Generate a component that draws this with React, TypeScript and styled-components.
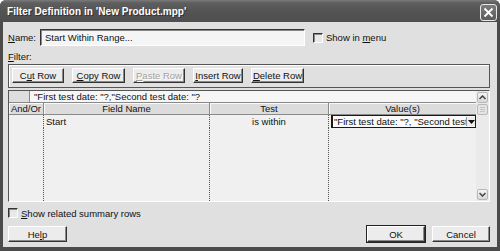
import React from "react";
import styled, { createGlobalStyle } from "styled-components";

const Global = createGlobalStyle`
  html, body { margin: 0; padding: 0; background: #ffffff; }
  body { font-family: "Liberation Sans", Arial, sans-serif; }
  * { box-sizing: border-box; }
`;

const Window = styled.div`
  width: 500px;
  height: 251px;
  background: #4b4b4b;
  border-radius: 6px 6px 0 0;
  display: flex;
  flex-direction: column;
  overflow: hidden;
`;

const TitleBar = styled.div`
  height: 22px;
  flex: none;
  display: flex;
  align-items: center;
  justify-content: space-between;
  padding: 0 3px 0 7px;
  background: linear-gradient(#7a7a7a 0px, #5e5e5e 3px, #545454 11px, #4e4e4e 22px);
`;

const Title = styled.div`
  color: #ffffff;
  font-weight: bold;
  font-size: 10px;
  letter-spacing: 0.05px;
  text-shadow: 1px 1px 0 #333;
`;

const CloseButton = styled.div`
  width: 17px;
  height: 17px;
  margin-top: 3px;
  border: 1px solid #e8e8e8;
  border-radius: 3px;
  background: linear-gradient(#7c7c7c, #5c5c5c);
  display: flex;
  align-items: center;
  justify-content: center;
`;

const Body = styled.div`
  flex: 1;
  margin: 0 3px 4px 3px;
  background: #e0e0e0;
  padding: 7px 7px 5px 5px;
  display: flex;
  flex-direction: column;
  font-size: 9.5px;
  color: #111;
`;

const NameRow = styled.div`
  display: flex;
  align-items: center;
  height: 17px;
`;

const Label = styled.span<{ $w?: number }>`
  width: ${(p) => (p.$w ? `${p.$w}px` : "auto")};
  flex: none;
  white-space: nowrap;
`;

const TextInput = styled.div`
  width: 265px;
  height: 17px;
  background: #f5f5f5;
  border-top: 1px solid #333;
  border-left: 1px solid #333;
  border-bottom: 1px solid #fff;
  border-right: 1px solid #fff;
  box-shadow: inset 1px 1px 0 #888;
  padding: 0 4px;
  display: flex;
  align-items: center;
`;

const CheckRow = styled.div<{ $ml?: number; $mt?: number }>`
  display: flex;
  align-items: center;
  gap: 3px;
  margin-left: ${(p) => p.$ml ?? 0}px;
  margin-top: ${(p) => p.$mt ?? 0}px;
  height: 12px;
`;

const Checkbox = styled.div`
  width: 10px;
  height: 10px;
  border-top: 1px solid #333;
  border-left: 1px solid #333;
  border-bottom: 1px solid #fff;
  border-right: 1px solid #fff;
  box-shadow: inset 1px 1px 0 #888;
  background: #e8e8e8;
`;

const SectionLabel = styled.div`
  margin-top: 5px;
  line-height: 11px;
  height: 11px;
`;

const Toolbar = styled.div`
  margin-top: 2px;
  height: 24px;
  border: 1px solid #555;
  box-shadow: inset 1px 1px 0 #fff;
  display: flex;
  align-items: flex-start;
  gap: 8px;
  padding: 3px 3px 0 3px;
`;

const Button = styled.div<{ $w: number; $h?: number; $disabled?: boolean; $default?: boolean }>`
  width: ${(p) => p.$w}px;
  height: ${(p) => p.$h ?? 15}px;
  flex: none;
  background: #ececec;
  border-top: 1px solid #fff;
  border-left: 1px solid #fff;
  border-right: 1px solid #333;
  border-bottom: 1px solid #333;
  box-shadow: inset -1px -1px 0 #8a8a8a${(p) => (p.$default ? ", 0 0 0 1px #222" : "")};
  display: flex;
  align-items: center;
  justify-content: center;
  white-space: nowrap;
  color: ${(p) => (p.$disabled ? "#a0a0a0" : "#111")};
  text-shadow: ${(p) => (p.$disabled ? "1px 1px 0 #fff" : "none")};
`;

const Grid = styled.div`
  margin-top: 2px;
  height: 112px;
  border-top: 1px solid #555;
  border-left: 1px solid #555;
  border-bottom: 1px solid #fff;
  border-right: 1px solid #fff;
  display: flex;
  background: #f0f0f0;
`;

const TableArea = styled.div`
  flex: 1;
  display: flex;
  flex-direction: column;
  min-width: 0;
`;

const EditBar = styled.div`
  height: 12px;
  display: flex;
  flex: none;
`;

const EditStub = styled.div`
  width: 21px;
  background: #dedede;
  border-right: 1px solid #888;
  border-bottom: 1px solid #888;
`;

const EditField = styled.div`
  flex: 1;
  background: #f6f6f6;
  border-bottom: 1px solid #888;
  padding-left: 4px;
  display: flex;
  align-items: center;
  white-space: nowrap;
`;

const Table = styled.div`
  flex: 1;
  display: grid;
  grid-template-columns: 35px 166px 119px 148px;
  grid-template-rows: 12px 13px 1fr;
`;

const HeadCell = styled.div`
  background: #dcdcdc;
  border-right: 1px solid #8a8a8a;
  border-bottom: 1px solid #8a8a8a;
  box-shadow: inset 1px 1px 0 #fafafa;
  display: flex;
  align-items: center;
  justify-content: center;
  white-space: nowrap;
`;

const Cell = styled.div<{ $align?: string; $last?: boolean }>`
  border-right: ${(p) => (p.$last ? "none" : "1px dotted #555")};
  display: flex;
  align-items: center;
  justify-content: ${(p) => p.$align ?? "flex-start"};
  padding-left: ${(p) => (p.$align === "center" ? 0 : 2)}px;
  white-space: nowrap;
  overflow: hidden;
`;

const SelectedCell = styled.div`
  width: 146px;
  border: 2px solid #1a1a1a;
  background: #fafafa;
  display: flex;
  align-items: center;
  overflow: hidden;
`;

const SelectedText = styled.span`
  flex: 1;
  min-width: 0;
  overflow: hidden;
  white-space: nowrap;
  padding-left: 1px;
`;

const DropButton = styled.div`
  width: 9px;
  height: 9px;
  flex: none;
  background: #ececec;
  display: flex;
  align-items: center;
  justify-content: center;
  border-left: 1px solid #999;
`;

const ScrollBar = styled.div`
  width: 13px;
  flex: none;
  background: #eaeaea;
  display: flex;
  flex-direction: column;
  align-items: center;
  padding: 1px 0 1px 0;
  gap: 1px;
`;

const ScrollBtn = styled.div`
  width: 11px;
  height: 11px;
  border: 1px solid #b8b8b8;
  border-radius: 2px;
  background: linear-gradient(#f4f4f4, #d8d8d8);
  display: flex;
  align-items: center;
  justify-content: center;
`;

const Thumb = styled.div`
  width: 11px;
  height: 11px;
  border: 1px solid #b8b8b8;
  border-radius: 2px;
  background: #e4e4e4;
  display: flex;
  flex-direction: column;
  align-items: center;
  justify-content: center;
  gap: 1px;
`;

const Grip = styled.div`
  width: 5px;
  height: 1px;
  background: #c4c4c4;
`;

const Spacer = styled.div`
  flex: 1;
`;

const Footer = styled.div`
  margin-top: 7px;
  display: flex;
  align-items: center;
  gap: 7px;
`;

const U = styled.span`
  text-decoration: underline;
  text-underline-offset: 1px;
`;

const Chevron = ({ up }: { up?: boolean }) => (
  <svg width="7" height="5" viewBox="0 0 7 5">
    <path
      d={up ? "M0.5 4 L3.5 1 L6.5 4" : "M0.5 1 L3.5 4 L6.5 1"}
      stroke="#444"
      strokeWidth="1.5"
      fill="none"
    />
  </svg>
);

export default function App() {
  return (
    <>
      <Global />
      <Window>
        <TitleBar>
          <Title>Filter Definition in 'New Product.mpp'</Title>
          <CloseButton>
            <svg width="11" height="11" viewBox="0 0 11 11">
              <path d="M1.5 1.5 L9.5 9.5 M9.5 1.5 L1.5 9.5" stroke="#fff" strokeWidth="1.8" />
            </svg>
          </CloseButton>
        </TitleBar>
        <Body>
          <NameRow>
            <Label $w={32}>
              <U>N</U>ame:
            </Label>
            <TextInput>Start Within Range...</TextInput>
            <CheckRow $ml={8}>
              <Checkbox />
              <span>
                Show in <U>m</U>enu
              </span>
            </CheckRow>
          </NameRow>
          <SectionLabel>
            <U>F</U>ilter:
          </SectionLabel>
          <Toolbar>
            <Button $w={52}>
              C<U>u</U>t Row
            </Button>
            <Button $w={53}>
              <U>C</U>opy Row
            </Button>
            <Button $w={52} $disabled>
              <U>P</U>aste Row
            </Button>
            <Button $w={50}>
              <U>I</U>nsert Row
            </Button>
            <Button $w={53}>
              <U>D</U>elete Row
            </Button>
          </Toolbar>
          <Grid>
            <TableArea>
              <EditBar>
                <EditStub />
                <EditField>"First test date: "?,"Second test date: "?</EditField>
              </EditBar>
              <Table>
                <HeadCell>And/Or</HeadCell>
                <HeadCell>Field Name</HeadCell>
                <HeadCell>Test</HeadCell>
                <HeadCell>Value(s)</HeadCell>
                <Cell />
                <Cell>Start</Cell>
                <Cell $align="center">is within</Cell>
                <Cell $last>
                  <SelectedCell>
                    <SelectedText>"First test date: "?, "Second test dat</SelectedText>
                    <DropButton>
                      <svg width="7" height="4" viewBox="0 0 7 4">
                        <path d="M0 0 H7 L3.5 4 Z" fill="#111" />
                      </svg>
                    </DropButton>
                  </SelectedCell>
                </Cell>
                <Cell />
                <Cell />
                <Cell />
                <Cell $last />
              </Table>
            </TableArea>
            <ScrollBar>
              <ScrollBtn>
                <Chevron up />
              </ScrollBtn>
              <Thumb>
                <Grip />
                <Grip />
                <Grip />
              </Thumb>
              <Spacer />
              <ScrollBtn>
                <Chevron />
              </ScrollBtn>
            </ScrollBar>
          </Grid>
          <CheckRow $mt={5}>
            <Checkbox />
            <span>
              <U>S</U>how related summary rows
            </span>
          </CheckRow>
          <Footer>
            <Button $w={59} $h={16}>
              He<U>l</U>p
            </Button>
            <Spacer />
            <Button $w={58} $h={16} $default>
              OK
            </Button>
            <Button $w={58} $h={16}>
              Cancel
            </Button>
          </Footer>
        </Body>
      </Window>
    </>
  );
}
